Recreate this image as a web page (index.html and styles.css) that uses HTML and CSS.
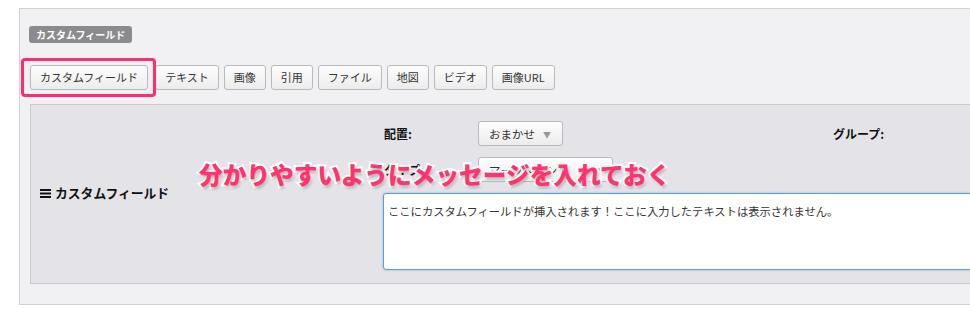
FILE: index.html
```html
<!DOCTYPE html>
<html lang="ja">
<head>
<meta charset="utf-8">
<link rel="stylesheet" href="styles.css">
</head>
<body>
<div class="outer">
  <div class="badge">カスタムフィールド</div>
  <div class="btnrow">
    <button class="btn first">カスタムフィールド</button>
    <button class="btn">テキスト</button>
    <button class="btn">画像</button>
    <button class="btn">引用</button>
    <button class="btn">ファイル</button>
    <button class="btn">地図</button>
    <button class="btn">ビデオ</button>
    <button class="btn">画像URL</button>
  </div>
  <div class="unit">
    <div class="unit-label">
      <svg class="menu-icon" width="11" height="9" viewBox="0 0 11 9"><rect x="0" y="0" width="11" height="2" fill="#111"/><rect x="0" y="3.5" width="11" height="2" fill="#111"/><rect x="0" y="7" width="11" height="2" fill="#111"/></svg>
      <span>カスタムフィールド</span>
    </div>
    <div class="unit-body">
      <div class="row row1">
        <span class="lbl">配置:</span>
        <div class="sel sel-small">おまかせ<span class="arrow">▼</span></div>
        <span class="lbl group">グループ:</span>
      </div>
      <div class="row">
        <span class="lbl">タイプ:</span>
        <div class="sel sel-wide">マークダウン<span class="arrow">▼</span></div>
      </div>
      <div class="textarea">ここにカスタムフィールドが挿入されます！ここに入力したテキストは表示されません。</div>
    </div>
  </div>
</div>
<div class="highlight"></div>
<div class="note">分かりやすいようにメッセージを入れておく</div>
</body>
</html>
```
FILE: styles.css
```css
html, body {
  margin: 0;
  padding: 0;
  background: #ffffff;
  overflow: hidden;
  width: 970px;
  height: 309px;
  font-family: "Noto Sans CJK JP", "Noto Sans", sans-serif;
}
.outer {
  margin: 8px 0 0 19px;
  width: 1000px;
  height: 297px;
  box-sizing: border-box;
  border: 1px solid #d2d2d4;
  background: #f1f1f3;
  padding: 17px 0 0 10px;
}
.badge {
  display: flex;
  align-items: center;
  width: max-content;
  margin-left: -1px;
  height: 17px;
  padding: 0 7px;
  box-sizing: border-box;
  background: #8b8b8d;
  color: #fff;
  font-size: 10px;
  font-weight: 700;
  border-radius: 3px;
}
.btnrow {
  display: flex;
  gap: 5px;
  margin-top: 22px;
}
.btn {
  height: 25px;
  padding: 0 9px;
  border: 1px solid #b9b9bb;
  border-radius: 3px;
  background: linear-gradient(#fdfdfd, #ececed);
  font-family: "Noto Sans CJK JP", sans-serif;
  font-size: 11px;
  color: #333;
  line-height: 23px;
}
.btn.first { margin-right: 2px; }
.unit {
  display: flex;
  margin-top: 14px;
  height: 180px;
  box-sizing: border-box;
  border: 1px solid #cbcbcd;
  background: #e4e3e8;
}
.unit-label {
  flex: 0 0 352px;
  display: flex;
  align-items: center;
  gap: 4px;
  padding-left: 9px;
  padding-bottom: 3px;
  box-sizing: border-box;
  font-size: 12.8px;
  font-weight: 700;
  color: #111;
}
.menu-icon { margin-top: 1px; }
.unit-body {
  flex: 1 1 auto;
  min-width: 0;
  padding-top: 16px;
  display: flex;
  flex-direction: column;
  gap: 11px;
}
.row {
  display: flex;
  align-items: center;
  height: 25px;
}
.lbl {
  width: 95px;
  flex: 0 0 auto;
  font-size: 12px;
  font-weight: 700;
  color: #111;
  padding-left: 1px;
  box-sizing: border-box;
}
.lbl.group {
  margin-left: 269px;
  width: auto;
}
.sel {
  flex: 0 0 auto;
  height: 25px;
  box-sizing: border-box;
  border: 1px solid #b9b9bb;
  border-radius: 3px;
  background: linear-gradient(#fdfdfd, #ececed);
  font-size: 11.5px;
  color: #333;
  display: flex;
  align-items: center;
  padding-left: 10px;
  position: relative;
}
.sel-small { width: 85px; }
.sel-wide { width: 135px; }
.arrow {
  position: absolute;
  right: 11px;
  top: 7px;
  font-size: 8px;
  color: #999;
}
.textarea {
  width: 640px;
  height: 77px;
  box-sizing: border-box;
  border: 1px solid #5b9dd9;
  border-radius: 3px;
  box-shadow: 0 0 2px rgba(30, 140, 190, 0.5);
  background: #fff;
  padding: 8px 4px;
  font-size: 11.3px;
  line-height: 18px;
  color: #333;
}
.highlight {
  position: absolute;
  left: 21px;
  top: 58px;
  width: 135px;
  height: 39px;
  box-sizing: border-box;
  border: 3px solid #ff2d6e;
  border-radius: 4px;
}
.note {
  position: absolute;
  left: 199px;
  top: 158px;
  font-size: 23.7px;
  line-height: 32px;
  font-weight: 900;
  color: #ff3370;
  -webkit-text-stroke: 4px #ffffff;
  paint-order: stroke fill;
  text-shadow: 1px 2px 3px rgba(0, 0, 0, 0.35);
  white-space: nowrap;
}
```
